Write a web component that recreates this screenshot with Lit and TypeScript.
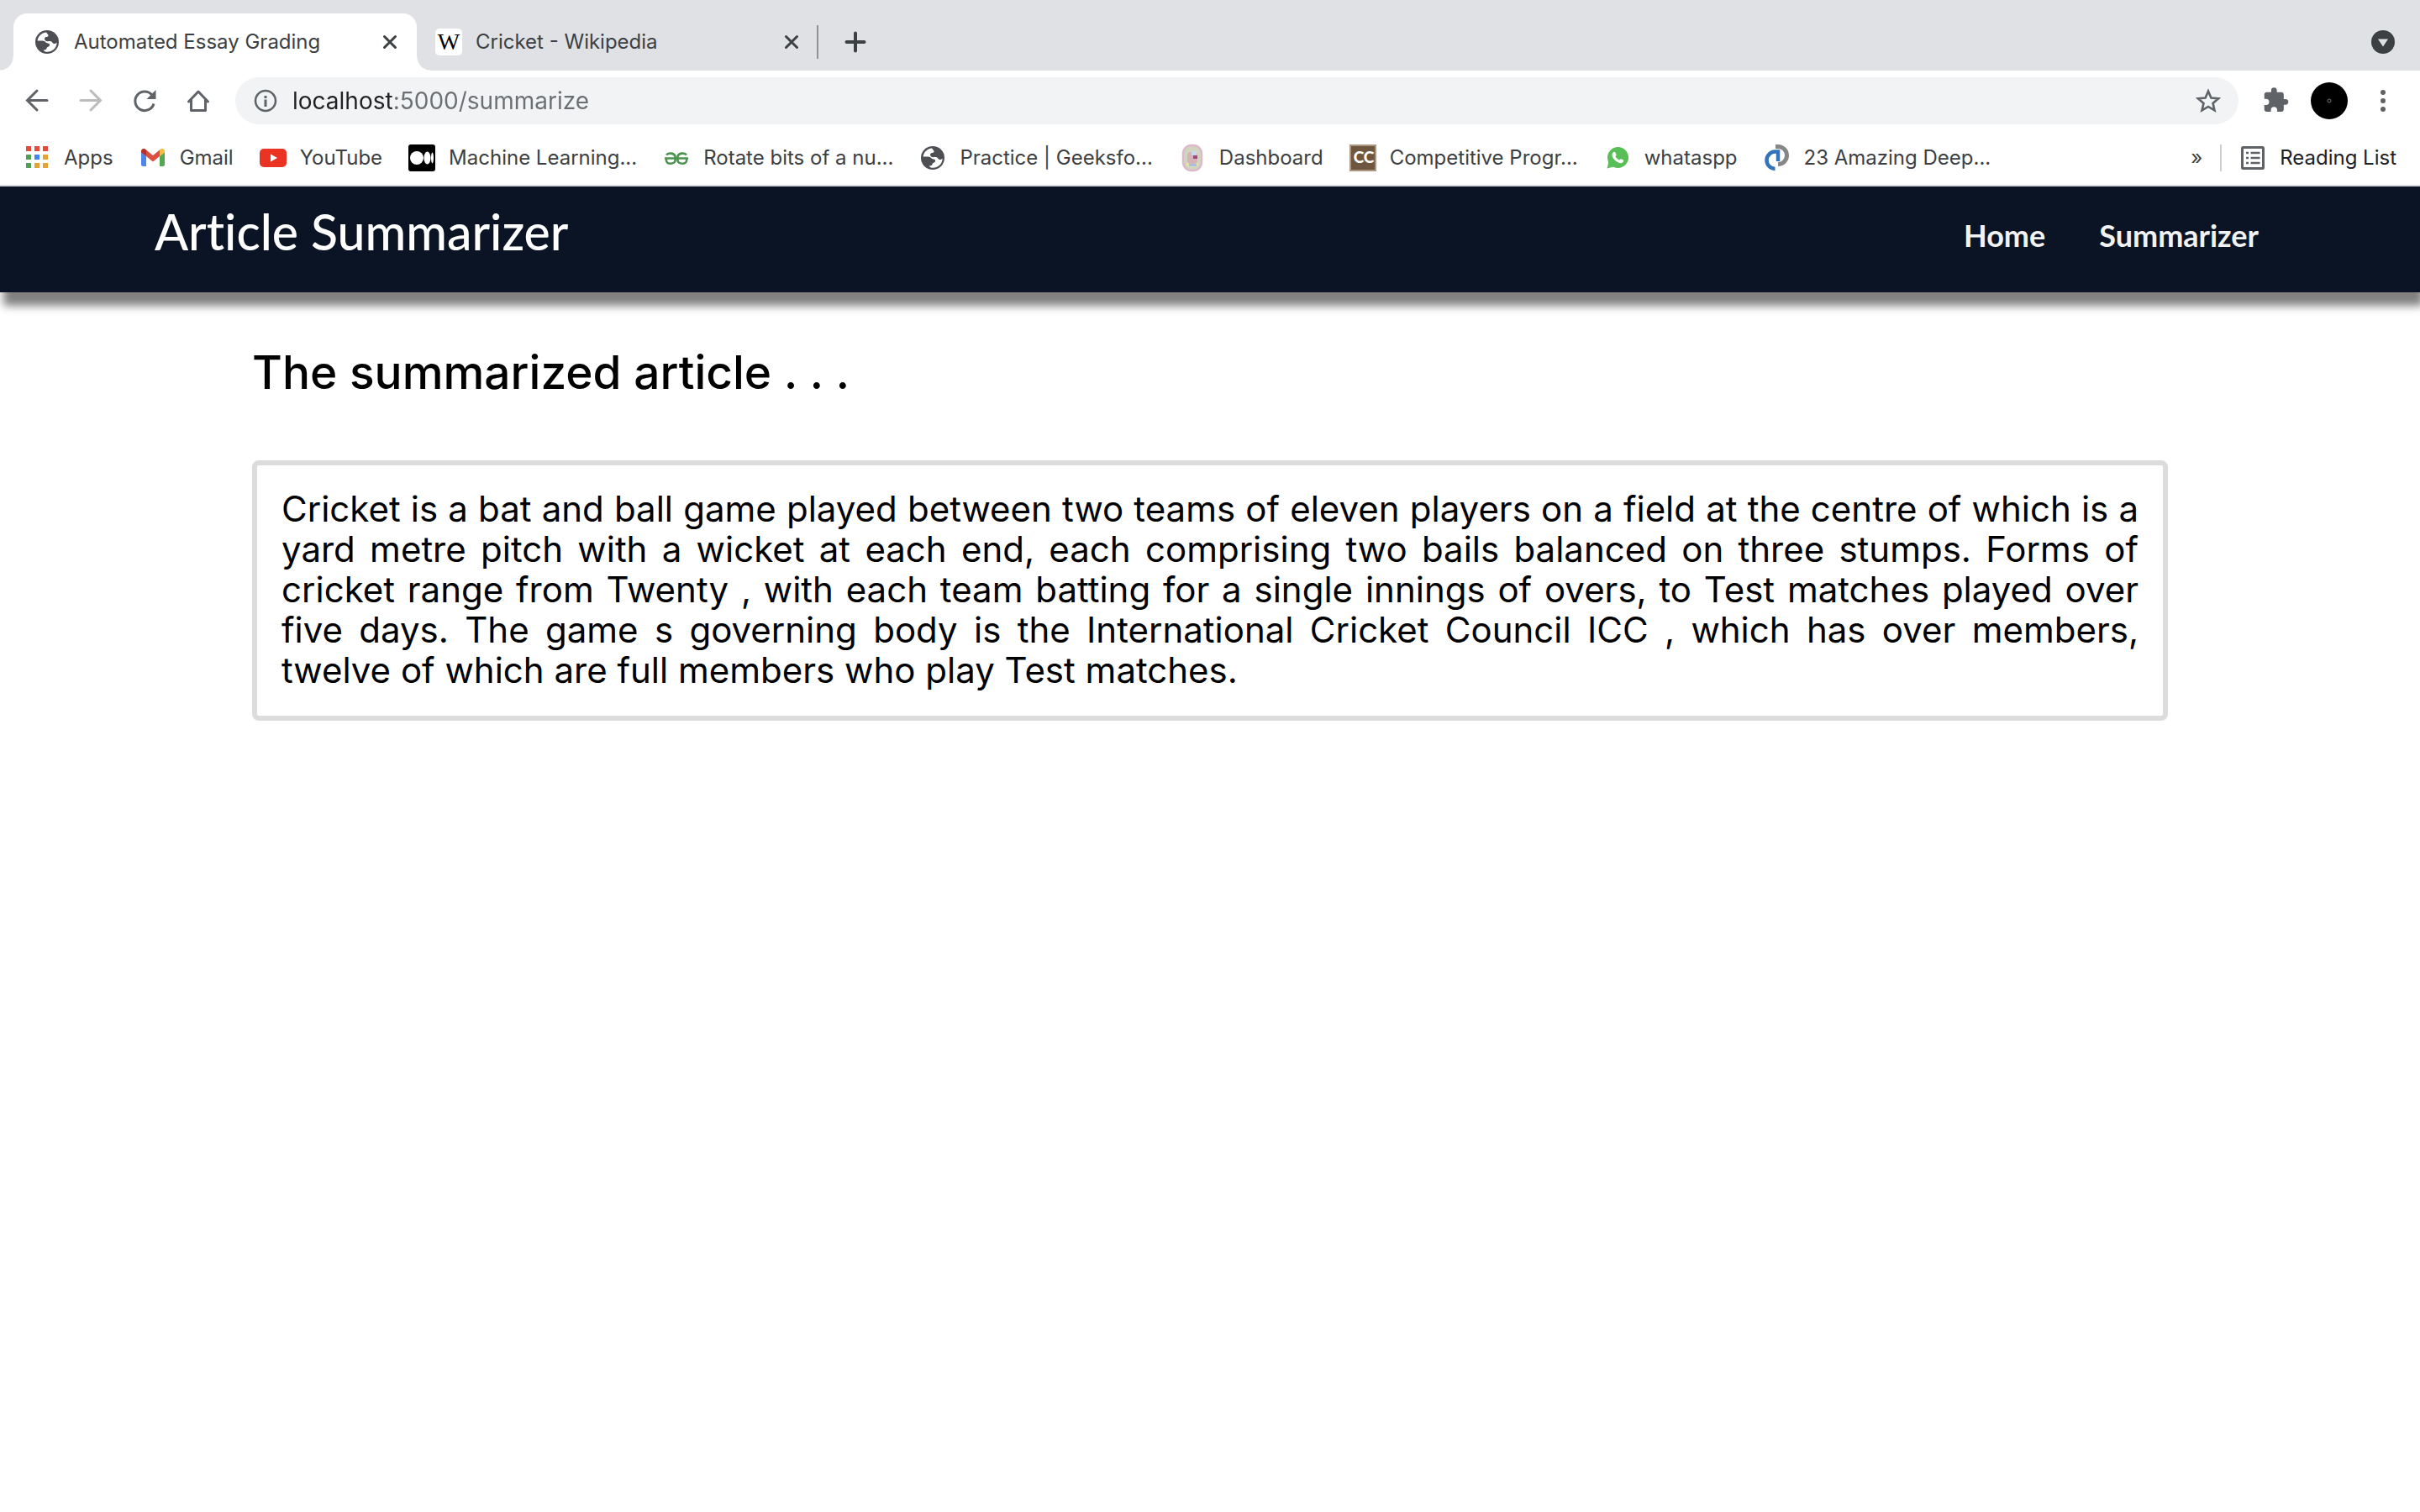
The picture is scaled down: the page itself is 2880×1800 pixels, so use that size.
import { LitElement, html, css, svg, nothing } from "lit";
import type { TemplateResult } from "lit";
import { customElement, property } from "lit/decorators.js";

const icon = (body: TemplateResult) =>
  html`<svg viewBox="0 0 32 32" width="32" height="32" aria-hidden="true">${body}</svg>`;

const globe = icon(svg`
  <circle cx="16" cy="16" r="14" fill="#4d4f55"/>
  <path fill="#fff" d="M15 4.500C9.500 5 5.300 9 4.600 14.500c2.400.2 5.400-.1 7.400.3 2.200.4 2.400 2.600 4.800 2.800 2 .2 2.600 1.200 2.200 2.600-.4 1.300-2.200 1.300-3 2.400-.7 1-.4 2.600-2.400 2.700l-1.800.1c.5 1.400 2.400 2.300 4.200 2.300 6.200 0 11.300-4.600 11.700-10.800-1.500.4-2.200 1.400-3.800 1-1.500-.4-1.700-2-3.200-2.600-2-.7-4.200.4-6.200-.6-1.700-.9-2-3-.6-4.200 1-.9 2.500-.4 3.300-1.300.8-1 .1-2-.6-2.800-.6-.7-1-1.300-1.600-1.900z"/>`);

const close = icon(svg`<path d="M9.500 9.500l13 13M22.500 9.500l-13 13" stroke="#3c4043" stroke-width="3" stroke-linecap="round"/>`);
const plus = icon(svg`<path d="M16 5.500v21M5.500 16h21" stroke="#3c4043" stroke-width="4" stroke-linecap="round"/>`);
const tabSearch = icon(svg`<circle cx="16" cy="16" r="14" fill="#3c4043"/><path d="M10 12.500h12l-6 9z" fill="#dfe1e5"/>`);
const back = icon(svg`<path d="M28 15.500H5M16 4L4.500 15.500 16 27" fill="none" stroke="#5f6368" stroke-width="3" stroke-linecap="round"/>`);
const forward = icon(svg`<path d="M4 15.500h23M16 4l11.500 11.500L16 27" fill="none" stroke="#babcbe" stroke-width="3" stroke-linecap="round"/>`);
const reload = icon(svg`<path d="M24.800 9A11.300 11.300 0 1 0 27 19.500" fill="none" stroke="#5f6368" stroke-width="3"/><path d="M29.500 3v11h-11z" fill="#5f6368"/>`);
const home = icon(svg`<path d="M4.500 17L16 5l11.500 12M7.500 15v12.500h17V15" fill="none" stroke="#5f6368" stroke-width="3" stroke-linejoin="round" stroke-linecap="round"/>`);
const info = icon(svg`<circle cx="16" cy="16" r="12" fill="none" stroke="#5f6368" stroke-width="2.500"/><path d="M14.500 14.500h3V23h-3zM14.500 10h3v3h-3z" fill="#5f6368"/>`);
const star = icon(svg`<path d="M16 4.500l3.400 8 8.700.7-6.600 5.700 2 8.500L16 22.900l-7.500 4.500 2-8.500L3.900 13.200l8.700-.7z" fill="none" stroke="#5f6368" stroke-width="2.600"/>`);
const puzzle = icon(svg`<path transform="translate(0 -1) scale(1.360)" fill="#5f6368" d="M20.500 11H19V7c0-1.100-.9-2-2-2h-4V3.500a2.500 2.500 0 0 0-5 0V5H4c-1.100 0-2 .9-2 2v3.800h1.500a2.700 2.700 0 0 1 0 5.400H2V20c0 1.100.9 2 2 2h3.800v-1.500a2.700 2.700 0 0 1 5.400 0V22H17c1.100 0 2-.9 2-2v-4h1.500a2.500 2.500 0 0 0 0-5z"/>`);
const dots = icon(svg`<g fill="#5f6368"><circle cx="16" cy="6" r="3"/><circle cx="16" cy="16" r="3"/><circle cx="16" cy="26" r="3"/></g>`);

const apps = icon(svg`
  <path fill="#e34b3d" d="M3 2h6v6H3zM13 2h6v6h-6zM23 2h6v6h-6z"/>
  <path fill="#4f9f57" d="M3 12h6v6H3zM3 22h6v6H3z"/>
  <path fill="#4285f4" d="M13 12h6v6h-6z"/>
  <path fill="#e5a332" d="M23 12h6v6h-6zM13 22h6v6h-6zM23 22h6v6h-6z"/>`);
const gmail = icon(svg`
  <path fill="#4f86ec" d="M2 9l6 5v12H4a2 2 0 0 1-2-2z"/>
  <path fill="#55a853" d="M30 9l-6 5v12h4a2 2 0 0 0 2-2z"/>
  <path fill="#dd4f41" d="M8 6.500l8 6.500 8-6.500V14l-8 6.500L8 14z"/>
  <path fill="#b3312a" d="M2 8c0-3 3.500-4 6-1.500V14l-6-4.600z"/>
  <path fill="#f3bd41" d="M30 8c0-3-3.500-4-6-1.500V14l6-4.600z"/>`);
const youtube = icon(svg`<rect y="5" width="32" height="22" rx="5" fill="#ea3323"/><path fill="#fff" d="M13 11.500l8 4.500-8 4.500z"/>`);
const medium = icon(svg`<rect width="32" height="32" rx="3"/><g fill="#fff"><circle cx="10" cy="16" r="8"/><ellipse cx="22.500" cy="16" rx="4" ry="7.500"/><ellipse cx="28.500" cy="16" rx="1.500" ry="6.500"/></g>`);
const geeks = icon(svg`<g fill="none" stroke="#4c944f" stroke-width="2.600"><path d="M4 12.500C6 10 13 9.500 14.500 14v5.500c-1 4-9.500 4.500-10.500 0-.4-1.200-.2-2 .2-3.200M28 12.500C26 10 19 9.500 17.500 14v5.500c1 4 9.500 4.500 10.500 0 .4-1.200.2-2-.2-3.200M2 16.500h28"/></g>`);
const crest = icon(svg`
  <rect x="5" y="1" width="22" height="30" rx="10" fill="#cfd6bd" stroke="#dcb9cc" stroke-width="2.500"/>
  <path d="M9 22h14v3q-7 4-14 0z" fill="#e3e2ab"/>
  <rect x="10" y="9" width="12" height="14" rx="4" fill="#d7b3b6"/>
  <path d="M15 8h6v5h-6z" fill="#c8d9ef"/><path d="M17 13h5v4h-5z" fill="#965078"/>
  <path d="M12 23h9v3h-9z" fill="#a9bfe6"/>`);
const codechef = icon(svg`<rect x="1" y="1" width="30" height="30" fill="#6f563f" stroke="#ab9480" stroke-width="2"/><text x="17" y="22" text-anchor="middle" font-family="Lato, sans-serif" font-weight="900" font-size="19" fill="#fff">CC</text>`);
const whatsapp = icon(svg`<circle cx="16.500" cy="15.500" r="12.500" fill="#57bf56"/><path fill="#57bf56" d="M3.500 28.500l2.200-9 6.500 6.800z"/><path fill="#fff" d="M11 9.200c.8-.8 2-.6 2.400.3l1.100 2.400c.3.700-.9 1.600-1.100 2.200.9 2 2.600 3.500 4.600 4.400.7-.1 1.400-1.700 2.300-1.300l2.600 1.300c.8.500.1 2.300-.8 3-2.300 1.600-5.700.2-8.300-1.900-2.700-2.300-4.700-5.300-4.300-7.800.1-1 .6-1.900 1.500-2.600z"/>`);
const deep = icon(svg`<path d="M14 2.500h3a10.500 10.500 0 0 1 0 21" fill="none" stroke="#868686" stroke-width="5"/><path d="M17 20V8.500h-3a10 10 0 0 0-.5 20.500" fill="none" stroke="#3173bd" stroke-width="4.500"/>`);
const wikipedia = icon(svg`<rect width="32" height="32" rx="5" fill="#fff"/><text x="16" y="25" text-anchor="middle" font-family="Liberation Serif, serif" font-size="28">W</text>`);
const readingList = icon(svg`<rect x="3.500" y="3.500" width="25" height="25" rx="1" fill="none" stroke="#5f6368" stroke-width="3"/><path d="M8 10h3M13.500 10h11M8 16h3M13.500 16h11M8 22h3M13.500 22h11" stroke="#5f6368" stroke-width="2.500"/>`);

const bookmarks: { label: string; art: TemplateResult }[] = [
  { label: "Apps", art: apps },
  { label: "Gmail", art: gmail },
  { label: "YouTube", art: youtube },
  { label: "Machine Learning...", art: medium },
  { label: "Rotate bits of a nu...", art: geeks },
  { label: "Practice | Geeksfo...", art: globe },
  { label: "Dashboard", art: crest },
  { label: "Competitive Progr...", art: codechef },
  { label: "whataspp", art: whatsapp },
  { label: "23 Amazing Deep...", art: deep },
];

const shared = css`
  * { box-sizing: border-box; }
  svg { display: block; flex: none; overflow: visible; }
  button {
    display: flex; align-items: center; justify-content: center;
    padding: 0; border: 0; background: none; font: inherit; color: inherit;
  }
  a { color: inherit; text-decoration: none; }
`;

@customElement("browser-tab")
export class BrowserTab extends LitElement {
  @property() label = "";
  @property({ type: Boolean, reflect: true }) active = false;
  @property({ attribute: false }) art: TemplateResult | typeof nothing = nothing;
  static styles = [shared, css`
    :host {
      display: flex; align-items: center; gap: 16px; position: relative;
      width: 476px; padding: 0 14px 0 22px; color: #3c4043;
    }
    :host([active]) { width: 480px; padding: 0 16px 0 24px; background: #fff; border-radius: 16px 16px 0 0; }
    :host([active])::before, :host([active])::after {
      content: ""; position: absolute; bottom: 0; width: 16px; height: 16px;
    }
    :host([active])::before { right: 100%; background: radial-gradient(circle at 0 0, #dfe1e5 15px, #fff 16px); }
    :host([active])::after { left: 100%; background: radial-gradient(circle at 100% 0, #dfe1e5 15px, #fff 16px); }
    .title { flex: 1; white-space: nowrap; }
  `];
  render() {
    return html`${this.art}<span class="title">${this.label}</span>
      <button aria-label="Close tab">${close}</button>`;
  }
}

@customElement("browser-chrome")
export class BrowserChrome extends LitElement {
  static styles = [shared, css`
    :host {
      display: block; background: #fff; border-bottom: 2px solid #d5d8de;
      font: 24px/32px Inter, sans-serif; color: #3c4043;
    }
    .strip { display: flex; align-items: center; height: 84px; padding: 16px 28px 0 16px; background: #dfe1e5; }
    browser-tab { align-self: stretch; }
    .rule { width: 2px; height: 40px; background: #8f9296; }
    .new { margin-left: 28px; }
    .push { margin-left: auto; }
    .toolbar { display: flex; align-items: center; gap: 28px; padding: 8px 28px; }
    .actions { display: flex; gap: 32px; }
    .omnibox {
      flex: 1; display: flex; align-items: center; gap: 16px; height: 56px;
      padding: 0 20px; border-radius: 28px; background: #f1f3f4;
    }
    .url {
      flex: 1; min-width: 0; padding: 0; border: 0; outline: 0;
      font: 28px/40px Inter, sans-serif; color: transparent;
      background: linear-gradient(90deg, #202124 121px, #6b6e72 121px);
      -webkit-background-clip: text; background-clip: text;
    }
    .avatar { width: 44px; height: 44px; border-radius: 50%; background: #000; }
    .tools { display: flex; align-items: center; gap: 26px; }
    .bookmarks { display: flex; align-items: center; height: 64px; padding: 0 28px; }
    .links { display: flex; gap: 31px; flex: 1; min-width: 0; }
    .bookmark { display: flex; align-items: center; gap: 16px; white-space: nowrap; }
    .more { display: flex; align-items: center; gap: 21px; }
    .divider { width: 2px; height: 32px; background: #cdcfd2; }
    .reading { gap: 16px; color: #202124; }
  `];
  render() {
    return html`
      <div class="strip">
        <browser-tab active label="Automated Essay Grading" .art=${globe}></browser-tab>
        <browser-tab label="Cricket - Wikipedia" .art=${wikipedia}></browser-tab>
        <span class="rule"></span>
        <button class="new" aria-label="New tab">${plus}</button>
        <button class="push" aria-label="Search tabs">${tabSearch}</button>
      </div>
      <div class="toolbar">
        <div class="actions">
          <button aria-label="Back">${back}</button>
          <button aria-label="Forward">${forward}</button>
          <button aria-label="Reload">${reload}</button>
          <button aria-label="Home">${home}</button>
        </div>
        <div class="omnibox">
          <button aria-label="Site information">${info}</button>
          <input class="url" type="text" aria-label="Address" .value=${"localhost:5000/summarize"}>
          <button aria-label="Bookmark this page">${star}</button>
        </div>
        <div class="tools">
          <button aria-label="Extensions">${puzzle}</button>
          <button class="avatar" aria-label="Profile">
            <svg viewBox="0 0 8 8" width="8" height="8"><circle cx="4" cy="4" r="2" fill="none" stroke="#777"/></svg>
          </button>
          <button aria-label="Menu">${dots}</button>
        </div>
      </div>
      <div class="bookmarks">
        <nav class="links" aria-label="Bookmarks">
          ${bookmarks.map((b) => html`<a class="bookmark" href="#">${b.art}<span>${b.label}</span></a>`)}
        </nav>
        <div class="more">
          <button aria-label="More bookmarks">»</button>
          <span class="divider"></span>
          <button class="reading">${readingList}<span>Reading List</span></button>
        </div>
      </div>`;
  }
}

@customElement("app-root")
export class AppRoot extends LitElement {
  static styles = [shared, css`
    :host { display: block; min-height: 100vh; background: #fff; color: #000; overflow-x: hidden; }
    .navbar {
      display: flex; align-items: flex-start; justify-content: space-between;
      height: 126px; padding: 18px 192px 0 184px; background: #0a1424; color: #fff;
      box-shadow: 4px 16px 10px gray; font-family: Lato, sans-serif;
      font-variant-ligatures: none;
    }
    .brand { font-size: 59px; line-height: 72px; font-weight: 500; }
    .menu { display: flex; gap: 64px; font-size: 36px; line-height: 80px; font-weight: 700; color: #f2f2f2; }
    main { padding: 56px 300px; font-family: Inter, sans-serif; }
    h1 { margin: 0 0 66px; font-size: 55px; line-height: 78px; font-weight: 500; }
    .summary {
      margin: 0; padding: 28px 29px 30px; border: 6px solid #dcdcdc; border-radius: 8px;
      font-size: 42px; line-height: 48px; text-align: justify;
    }
  `];
  render() {
    return html`
      <browser-chrome></browser-chrome>
      <header class="navbar">
        <a class="brand" href="#">Article Summarizer</a>
        <nav class="menu"><a href="#">Home</a><a href="#">Summarizer</a></nav>
      </header>
      <main>
        <h1>The summarized article . . .</h1>
        <p class="summary">Cricket is a bat and ball game played between two teams of eleven players on a field at the centre of which is a yard metre pitch with a wicket at each end, each comprising two bails balanced on three stumps. Forms of cricket range from Twenty , with each team batting for a single innings of overs, to Test matches played over five days. The game s governing body is the International Cricket Council ICC , which has over members, twelve of which are full members who play Test matches.</p>
      </main>`;
  }
}
